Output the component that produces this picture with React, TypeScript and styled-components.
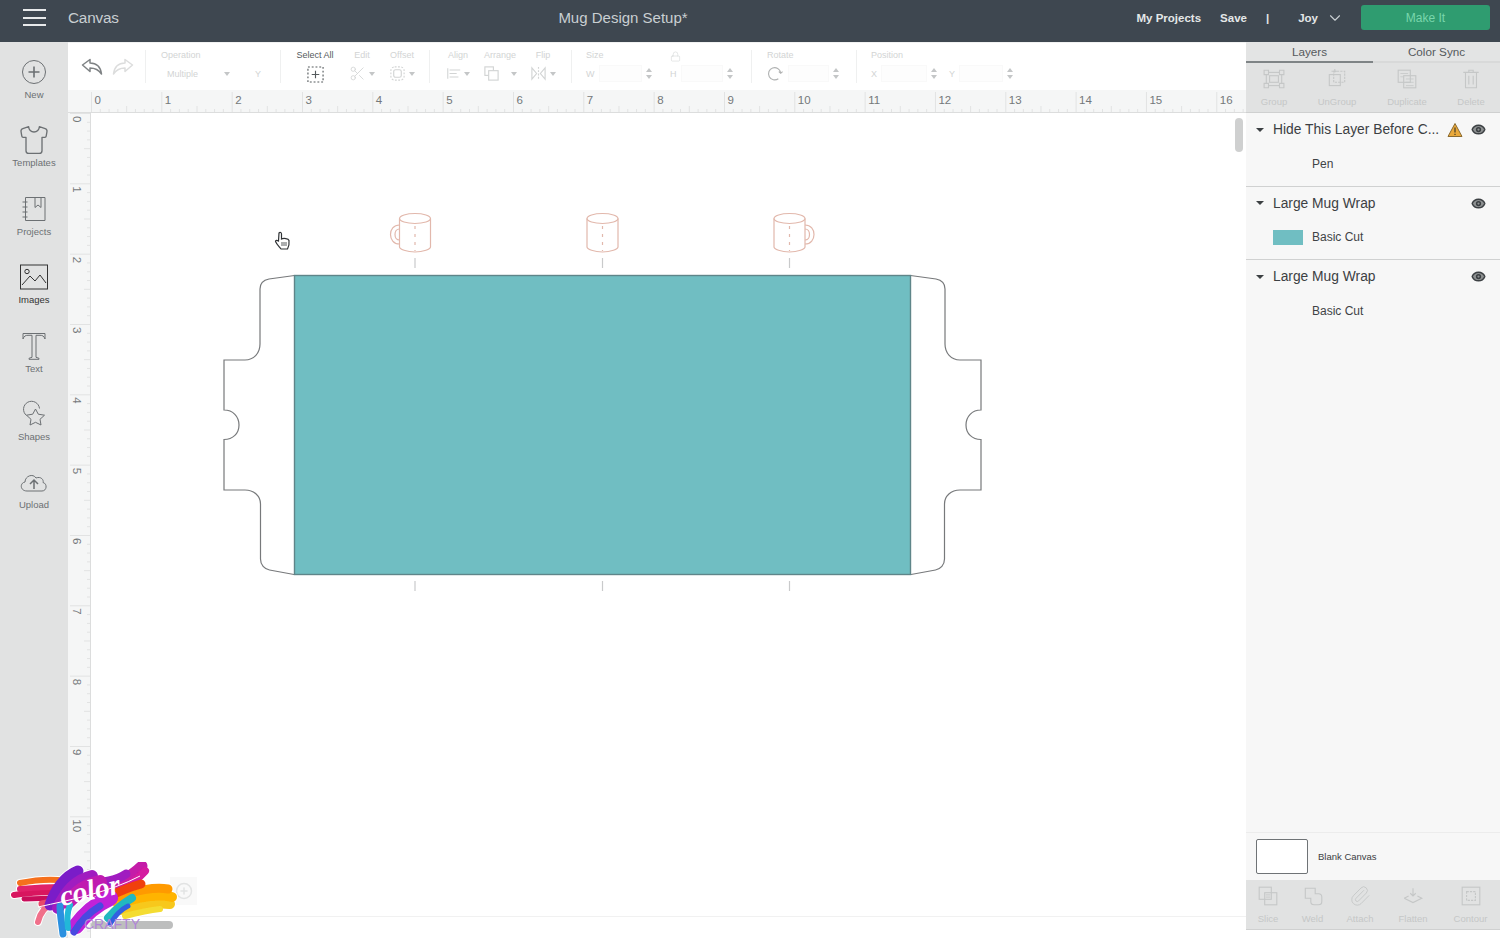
import React from "react";
import styled, { createGlobalStyle } from "styled-components";
import { CirclePlus, Shirt, ChevronDown, Eye, Paperclip, Scissors, Lock } from "lucide-react";

const UNIT = 70.33;
const MUG = "#e2b8ac";
const OUTLINE = "#77797b";

const GlobalStyle = createGlobalStyle`
  html, body { margin: 0; padding: 0; background: #fff; }
  body { font-family: "Liberation Sans", Arial, sans-serif; overflow: hidden; }
`;

const Page = styled.div`
  position: relative;
  width: 1500px;
  height: 938px;
  display: flex;
  flex-direction: column;
  overflow: hidden;
`;

const Header = styled.header`
  flex: 0 0 42px;
  box-sizing: border-box;
  padding-bottom: 7px;
  display: grid;
  grid-template-columns: 1fr auto 1fr;
  align-items: center;
  background: #3e4750;
  color: #e6e9ea;
`;

const HeaderLeft = styled.div`
  display: flex;
  align-items: center;
  padding-left: 23px;
`;

const Burger = styled.div`
  width: 23px;
  height: 13px;
  margin-right: 22px;
  border-top: 2px solid #e8eaeb;
  border-bottom: 2px solid #e8eaeb;
  position: relative;
  &::after {
    content: "";
    position: absolute;
    left: 0;
    right: 0;
    top: 5.5px;
    height: 2px;
    background: #e8eaeb;
  }
`;

const CanvasTitle = styled.span`
  font-size: 15.3px;
  color: #c9cfd2;
  letter-spacing: -0.2px;
`;

const DocTitle = styled.span`
  font-size: 15px;
  color: #c9cfd2;
  position: relative;
  left: -127px;
`;

const HeaderRight = styled.div`
  display: flex;
  align-items: center;
  justify-content: flex-end;
  padding-right: 10px;
  font-size: 11.5px;
  font-weight: 700;
  color: #e4e7e8;
`;

const HeaderLink = styled.span<{ $gap: number }>`
  margin-right: ${({ $gap }) => $gap}px;
`;

const JoyChevron = styled(ChevronDown)`
  width: 18px;
  height: 18px;
  margin: 0 17px 0 8px;
  stroke-width: 1.5;
  color: #c9cfd2;
`;

const MakeIt = styled.button`
  width: 129px;
  height: 25px;
  border: 0;
  border-radius: 3px;
  background: #2f9c70;
  color: #79d6ac;
  font: 12px "Liberation Sans", Arial, sans-serif;
`;

const Body = styled.div`
  flex: 1;
  min-height: 0;
  display: flex;
`;

const Sidebar = styled.nav`
  flex: 0 0 68px;
  background: #e1e2e2;
  padding-top: 14px;
  box-sizing: border-box;
`;

const SideItem = styled.div<{ $active?: boolean }>`
  height: 68.4px;
  display: flex;
  flex-direction: column;
  align-items: center;
  gap: 1px;
  color: ${({ $active }) => ($active ? "#333" : "#6c7073")};
  font-size: 9.5px;
  svg {
    width: 32px;
    height: 32px;
    stroke-width: 1;
  }
`;

const Main = styled.main`
  flex: 1;
  min-width: 0;
  display: flex;
  flex-direction: column;
`;

const Toolbar = styled.div`
  flex: 0 0 48px;
  display: flex;
  align-items: center;
  background: #fff;
  border-top: 1px solid #f1f2f2;
  box-sizing: border-box;
  color: #d2d4d4;
  font-size: 9px;
`;

const ToolGroup = styled.div<{ $width?: number; $pad: number; $gap?: number; $line?: boolean }>`
  flex: 0 0 ${({ $width }) => ($width ? `${$width}px` : "auto")};
  height: 33px;
  box-sizing: border-box;
  display: flex;
  align-items: stretch;
  padding-left: ${({ $pad }) => $pad}px;
  gap: ${({ $gap }) => $gap ?? 0}px;
  border-right: ${({ $line }) => ($line === false ? "none" : "1px solid #eff0f0")};
`;

const HistoryIcons = styled.div`
  display: flex;
  align-items: center;
  gap: 9px;
  svg {
    width: 22px;
    height: 18px;
  }
`;

const ToolColumn = styled.div<{ $width: number; $dark?: boolean; $align?: string }>`
  width: ${({ $width }) => $width}px;
  display: flex;
  flex-direction: column;
  align-items: ${({ $align }) => $align ?? "center"};
  justify-content: space-between;
  white-space: nowrap;
  color: ${({ $dark }) => ($dark ? "#555a5d" : "#d2d4d4")};
  svg {
    width: 17px;
    height: 17px;
    stroke-width: 1.2;
  }
`;

const ToolLabel = styled.span`
  line-height: 11px;
  height: 11px;
`;

const ControlRow = styled.div`
  width: 100%;
  height: 19px;
  display: flex;
  align-items: center;
  justify-content: space-between;
  gap: 2px;
`;

const OperationValue = styled.span`
  padding-left: 6px;
`;

const Caret = styled.i`
  flex: none;
  width: 0;
  height: 0;
  border-left: 3px solid transparent;
  border-right: 3px solid transparent;
  border-top: 4px solid #c4c6c7;
`;

const Spinner = styled.i`
  flex: none;
  width: 6px;
  height: 11px;
  position: relative;
  &::before,
  &::after {
    content: "";
    position: absolute;
    left: 0;
    border-left: 3px solid transparent;
    border-right: 3px solid transparent;
  }
  &::before {
    top: 0;
    border-bottom: 4px solid #c4c6c7;
  }
  &::after {
    bottom: 0;
    border-top: 4px solid #c4c6c7;
  }
`;

const FieldBox = styled.span`
  flex: 1;
  height: 15px;
  margin: 0 2px;
  background: #fdfdfd;
  border: 1px solid #f9f9f9;
`;

const LockGlyph = styled(Lock)`
  && {
    width: 11px;
    height: 13px;
  }
`;

const RulerTop = styled.svg`
  display: block;
  flex: 0 0 23px;
  width: 100%;
  height: 23px;
  background: #f5f6f6;
`;

const Workspace = styled.div`
  flex: 1;
  min-height: 0;
  display: flex;
`;

const RulerLeft = styled.svg`
  display: block;
  flex: 0 0 23px;
  height: 100%;
  background: #f5f6f6;
`;

const Canvas = styled.div`
  flex: 1;
  position: relative;
  background: #fff;
  overflow: hidden;
`;

const Artboard = styled.svg`
  position: absolute;
  left: 0;
  top: 0;
  width: 1155px;
  height: 825px;
`;

const CanvasScrollThumb = styled.div`
  position: absolute;
  right: 3px;
  top: 5px;
  width: 8px;
  height: 34px;
  border-radius: 4px;
  background: #cfd0d0;
`;

const BottomScrollLine = styled.div`
  position: absolute;
  left: 0;
  right: 0;
  bottom: 21px;
  height: 1px;
  background: #f1f1f1;
`;

const ZoomBox = styled.div`
  position: absolute;
  left: 79px;
  bottom: 33px;
  width: 27px;
  height: 28px;
  background: #f9f9f9;
  display: flex;
  align-items: center;
  justify-content: center;
  color: #e2e3e3;
  svg {
    width: 18px;
    height: 18px;
  }
`;

const BottomScrollThumb = styled.div`
  position: absolute;
  left: 0;
  bottom: 9px;
  width: 82px;
  height: 8px;
  border-radius: 4px;
  background: #bdbebe;
`;

const CursorMark = styled.svg`
  position: absolute;
  left: 183px;
  top: 118px;
  width: 17px;
  height: 20px;
`;

const Panel = styled.aside`
  flex: 0 0 254px;
  display: flex;
  flex-direction: column;
  background: #f7f7f7;
`;

const Tabs = styled.div`
  flex: 0 0 21px;
  display: grid;
  grid-template-columns: 127px 127px;
  background: #e3e4e4;
`;

const Tab = styled.div<{ $active?: boolean }>`
  display: flex;
  align-items: center;
  justify-content: center;
  font-size: 11.7px;
  color: #55595c;
  border-bottom: 2px solid ${({ $active }) => ($active ? "#7f8486" : "#d8d9d9")};
`;

const ActionRow = styled.div<{ $columns: string }>`
  flex: 0 0 50px;
  display: grid;
  grid-template-columns: ${({ $columns }) => $columns};
  background: #e1e2e2;
  border-bottom: 1px solid #cfd0d0;
  box-sizing: border-box;
`;

const ActionItem = styled.div`
  display: flex;
  flex-direction: column;
  align-items: center;
  justify-content: space-between;
  padding: 5px 0 5px;
  font-size: 9.5px;
  white-space: nowrap;
  color: #c5c7c7;
  svg {
    width: 22px;
    height: 22px;
    stroke-width: 1;
  }
`;

const LayerList = styled.div`
  flex: 1;
  min-height: 0;
`;

const LayerGroup = styled.section<{ $last?: boolean }>`
  height: 73.5px;
  box-sizing: border-box;
  padding-top: 0.5px;
  border-bottom: ${({ $last }) => ($last ? "none" : "1.5px solid #d0d1d1")};
`;

const LayerTitle = styled.div`
  height: 32px;
  display: flex;
  align-items: center;
  padding-left: 10px;
  font-size: 13.8px;
  color: #3c4043;
  white-space: nowrap;
`;

const LayerCaret = styled.i`
  flex: none;
  width: 0;
  height: 0;
  margin-right: 9px;
  border-left: 4px solid transparent;
  border-right: 4px solid transparent;
  border-top: 4px solid #3c4043;
`;

const LayerName = styled.span`
  flex: 1;
`;

const StatusIcon = styled.svg<{ $right: number }>`
  flex: none;
  width: 16px;
  height: 16px;
  margin-right: ${({ $right }) => $right}px;
`;

const EyeIcon = styled(Eye)`
  flex: none;
  width: 15px;
  height: 15px;
  margin-right: 14px;
  fill: #8d9091;
  color: #3c4043;
  stroke-width: 2.4;
`;

const LayerOp = styled.div`
  height: 36px;
  display: flex;
  align-items: center;
  padding-left: 27px;
  gap: 9px;
  font-size: 12px;
  color: #3f4346;
`;

const OpName = styled.span<{ $indent?: boolean }>`
  margin-left: ${({ $indent }) => ($indent ? "39px" : "0")};
`;

const Swatch = styled.span<{ $color: string }>`
  width: 30px;
  height: 15px;
  background: ${({ $color }) => $color};
`;

const BlankRow = styled.div`
  flex: 0 0 48px;
  box-sizing: border-box;
  display: flex;
  align-items: center;
  gap: 10px;
  padding-left: 10px;
  border-top: 1px solid #ececec;
  font-size: 9.5px;
  color: #3c4043;
`;

const BlankThumb = styled.div`
  width: 50px;
  height: 33px;
  background: #fff;
  border: 1px solid #6f7376;
  border-radius: 2px;
`;

const PanelFoot = styled.div`
  flex: 0 0 8px;
  background: #fff;
`;

const LogoMark = styled.svg`
  position: absolute;
  left: 0;
  bottom: 0;
  width: 200px;
  height: 80px;
`;

const SideIcons: { label: string; icon: React.ReactNode; active?: boolean }[] = [
  {
    label: "New",
    icon: (
      <svg viewBox="0 0 32 32" fill="none" stroke="currentColor" strokeWidth="1.3">
        <circle cx="16" cy="16" r="11.5" />
        <path d="M16 10.500v11M10.500 16h11" strokeWidth="1.6" />
      </svg>
    ),
  },
  { label: "Templates", icon: <Shirt /> },
  {
    label: "Projects",
    icon: (
      <svg viewBox="0 0 32 32" fill="none" stroke="currentColor" strokeWidth="1.2">
        <path d="M7.500 4.500H27v23H7.500Z" />
        <path d="M4.500 9h5M4.500 14h5M4.500 19h5M4.500 24h5" />
        <path d="M17 4.500v10l3-2.500 3 2.500v-10" />
      </svg>
    ),
  },
  {
    label: "Images",
    active: true,
    icon: (
      <svg viewBox="0 0 32 32" fill="none" stroke="currentColor" strokeWidth="1.4">
        <rect x="2.500" y="4" width="27" height="24" />
        <circle cx="9" cy="10.500" r="2.200" />
        <path d="M4 24 12 15l5 5 5-6 6 8" />
      </svg>
    ),
  },
  {
    label: "Text",
    icon: (
      <svg viewBox="0 0 32 32" fill="none" stroke="currentColor" strokeWidth="1.2">
        <path d="M5 9V3.500h22V9c-1-3-2.500-3.700-5-3.700h-4v22l3 1v1H11v-1l3-1v-22h-4C7.500 5.300 6 6 5 9Z" />
      </svg>
    ),
  },
  {
    label: "Shapes",
    icon: (
      <svg viewBox="0 0 32 32" fill="none" stroke="currentColor" strokeWidth="1.2">
        <path d="M8.500 17.500a8 8 0 1 1 13-7" />
        <path d="m17.500 11 2.800 5.200 6.200 1-4.500 4.100 1 5.700-5.500-2.700-5.500 2.700 1-5.700-4.500-4.100 6.200-1Z" />
      </svg>
    ),
  },
  {
    label: "Upload",
    icon: (
      <svg viewBox="0 0 32 32" fill="none" stroke="currentColor" strokeWidth="1.2">
        <path d="M9 25c-7 0-7.500-8-2-9 0-6 8-9 11-4 5-2 8 2 7 4.500 4.500 1 4 8.500-1 8.500Z" />
        <path d="M16 23v-9M12 18l4-4 4 4" strokeWidth="1.5" />
      </svg>
    ),
  },
];

type Streak = { d: string; w: number; c: string };

const LOGO_STREAKS: Streak[] = [
  { d: "M14 895C25 893 40 892 58 892", w: 6, c: "#d8125e" },
  { d: "M20 889C32 888 46 887 60 887", w: 6, c: "#e0206a" },
  { d: "M24 899L58 898", w: 5, c: "#c8105a" },
  { d: "M20 883C30 881 45 879 58 880", w: 6, c: "#f5701c" },
  { d: "M42 904L62 900", w: 7, c: "#e8486a" },
  { d: "M38 922C40 912 46 906 54 902", w: 6, c: "#f0708a" },
  { d: "M116 911C135 906 155 902 170 904", w: 10, c: "#f7c81c" },
  { d: "M125 916C140 912 150 910 160 909", w: 6, c: "#f4dc30" },
  { d: "M118 904C135 898 155 893 172 897", w: 10, c: "#ffb400" },
  { d: "M120 897C135 890 155 887 168 889", w: 9, c: "#ff9a00" },
  { d: "M90 892C110 888 130 878 142 866", w: 11, c: "#c41ba8" },
  { d: "M100 897C118 893 132 885 145 871", w: 8, c: "#d41aa0" },
  { d: "M84 884C100 884 118 880 126 874", w: 9, c: "#a01cc0" },
  { d: "M108 897C118 892 130 887 141 884", w: 9, c: "#f0400e" },
  { d: "M50 905C55 890 65 876 78 871", w: 11, c: "#7a1fc8" },
  { d: "M58 908C66 892 75 880 92 876", w: 12, c: "#a01fc0" },
  { d: "M68 902C78 892 85 885 100 882", w: 14, c: "#c01cb0" },
  { d: "M76 926C84 915 95 905 110 898", w: 16, c: "#c020d8" },
  { d: "M74 932C80 922 90 912 100 906", w: 7, c: "#4a48e0" },
  { d: "M63 934C62 925 60 915 60 906", w: 7, c: "#2a90e0" },
  { d: "M68 928C67 920 67 912 70 905", w: 6, c: "#20b8d8" },
  { d: "M108 918C115 910 122 904 132 898", w: 8, c: "#20b8c0" },
  { d: "M110 924C116 915 120 910 128 906", w: 5, c: "#3060e0" },
];

function buildTicks(count: number, long: number, small: number, along: "x" | "y") {
  const offset = along === "x" ? 23.5 : 0.5;
  const lines: React.ReactNode[] = [];
  for (let i = 0; i < count * 8; i++) {
    const pos = offset + (i * UNIT) / 8;
    const isUnit = i % 8 === 0;
    const len = isUnit ? long : i % 4 === 0 ? small + 3 : small;
    lines.push(
      along === "x" ? (
        <line key={i} x1={pos} x2={pos} y1={23 - len} y2={23} stroke="#e2e3e3" />
      ) : (
        <line key={i} y1={pos} y2={pos} x1={23 - len} x2={23} stroke="#e2e3e3" />
      ),
    );
  }
  return lines;
}

function TopRuler() {
  return (
    <RulerTop>
      {buildTicks(17, 21, 4, "x")}
      {Array.from({ length: 17 }, (_, i) => (
        <text key={i} x={23.5 + i * UNIT + 3} y={14} fontSize="11.5" fill="#74787a">
          {i}
        </text>
      ))}
      <line x1="0" x2="1178" y1="22.5" y2="22.5" stroke="#dcdddd" />
    </RulerTop>
  );
}

function LeftRuler() {
  return (
    <RulerLeft>
      {buildTicks(12, 21, 4, "y")}
      {Array.from({ length: 12 }, (_, i) => {
        const y = i * UNIT + 3;
        return (
          <text key={i} x={4.5} y={y} fontSize="11.5" fill="#74787a" transform={`rotate(90 4.500 ${y})`}>
            {i}
          </text>
        );
      })}
      <line x1="22.5" x2="22.5" y1="0" y2="825" stroke="#dcdddd" />
    </RulerLeft>
  );
}

function Mug({ x, handle }: { x: number; handle?: "left" | "right" }) {
  return (
    <g fill="none" stroke={MUG} strokeWidth="1.200">
      <ellipse cx={x} cy={218.5} rx={15.5} ry={5} />
      <path d={`M${x - 15.5} 218.500V247c0 2 7 5 15.500 5s15.500-3 15.500-5V218.500`} />
      <path d={`M${x} 226V251`} strokeDasharray="3 5" />
      {handle === "left" && <path d={`M${x - 15.5} 225c-12 0-12 19 0 19M${x - 15.5} 229c-6 0-6 11 0 11`} />}
      {handle === "right" && <path d={`M${x + 15.5} 225c12 0 12 19 0 19M${x + 15.5} 229c6 0 6 11 0 11`} />}
      <path d={`M${x} 258V268`} stroke="#c9cacb" />
      <path d={`M${x} 581V591`} stroke="#c9cacb" />
    </g>
  );
}

function Artwork() {
  return (
    <Artboard viewBox="91 113 1155 825">
      <Mug x={415} handle="left" />
      <Mug x={602.5} />
      <Mug x={789.5} handle="right" />
      <path
        d="M294.500 275.500 269 279c-5.500 1-9 4.500-9 10v55c0 9-6 16-15 16h-21v50c9 0 15 6.500 15 15s-6 14.500-15 14.500V490h21c9 0 15.500 6 15.500 14v55c0 6 4 10 9 11l24.500 4.500"
        fill="none"
        stroke={OUTLINE}
        strokeWidth="1.200"
      />
      <path
        d="M910.500 275.500 936 279c5.500 1 9 4.500 9 10v55c0 9 6 16 15 16h21v50c-9 0-15 6.500-15 15s6 14.500 15 14.500V490h-21c-9 0-15.500 6-15.500 14v55c0 6-4 10-9 11l-24.500 4.500"
        fill="none"
        stroke={OUTLINE}
        strokeWidth="1.200"
      />
      <rect x="294.500" y="275.500" width="616" height="299" fill="#70bec2" stroke="#5f8589" strokeWidth="1.400" />
    </Artboard>
  );
}

function Logo() {
  return (
    <LogoMark viewBox="0 858 200 80">
      <defs>
        <filter id="soft" x="-5%" y="-5%" width="110%" height="110%">
          <feGaussianBlur stdDeviation="0.7" />
        </filter>
      </defs>
      <g fill="none" strokeLinecap="round">
        {LOGO_STREAKS.map((s) => (
          <path key={`halo-${s.d}`} d={s.d} stroke="#fff" strokeWidth={s.w + 2} />
        ))}
        <g filter="url(#soft)">
          {LOGO_STREAKS.map((s) => (
            <path key={s.d} d={s.d} stroke={s.c} strokeWidth={s.w} />
          ))}
        </g>
      </g>
      <path d="M38 907C70 900 110 892 140 876" fill="none" stroke="#fff" strokeWidth="1" />
      <text
        x="62"
        y="906"
        fontFamily="'Liberation Serif', serif"
        fontStyle="italic"
        fontWeight="700"
        fontSize="29"
        fill="#fff"
        transform="rotate(-12 62 906)"
      >
        color
      </text>
      <text x="84" y="929" fontFamily="'Liberation Sans', Arial, sans-serif" fontSize="14" fill="#b184d8">
        CRAFTY
      </text>
    </LogoMark>
  );
}

export default function App() {
  return (
    <Page>
      <GlobalStyle />
      <Header>
        <HeaderLeft>
          <Burger />
          <CanvasTitle>Canvas</CanvasTitle>
        </HeaderLeft>
        <DocTitle>Mug Design Setup*</DocTitle>
        <HeaderRight>
          <HeaderLink $gap={19}>My Projects</HeaderLink>
          <HeaderLink $gap={19}>Save</HeaderLink>
          <HeaderLink $gap={29}>|</HeaderLink>
          <span>Joy</span>
          <JoyChevron />
          <MakeIt>Make It</MakeIt>
        </HeaderRight>
      </Header>
      <Body>
        <Sidebar>
          {SideIcons.map((item) => (
            <SideItem key={item.label} $active={item.active}>
              {item.icon}
              <span>{item.label}</span>
            </SideItem>
          ))}
        </Sidebar>
        <Main>
          <Toolbar>
            <ToolGroup $width={78} $pad={13} $line>
              <HistoryIcons>
                <svg viewBox="0 0 22 18" fill="none" stroke="#7e8284" strokeWidth="1.500" strokeLinejoin="round">
                  <path d="M1.500 7 9 1.500V5c6 0 10.500 3.500 11.500 11-3-4.500-6.500-6-11.500-6v3.500Z" />
                </svg>
                <svg viewBox="0 0 22 18" fill="none" stroke="#dcdddd" strokeWidth="1.500" strokeLinejoin="round">
                  <path d="M20.500 7 13 1.500V5C7 5 2.500 8.500 1.500 16c3-4.500 6.500-6 11.500-6v3.500Z" />
                </svg>
              </HistoryIcons>
            </ToolGroup>
            <ToolGroup $width={135} $pad={15}>
              <ToolColumn $width={100} $align="flex-start">
                <ToolLabel>Operation</ToolLabel>
                <ControlRow>
                  <OperationValue>Multiple</OperationValue>
                  <Caret />
                  <span>Y</span>
                </ControlRow>
              </ToolColumn>
            </ToolGroup>
            <ToolGroup $width={149} $pad={14} $gap={14}>
              <ToolColumn $width={40} $dark>
                <ToolLabel>Select All</ToolLabel>
                <svg viewBox="0 0 18 18" fill="none" stroke="#555a5d" strokeWidth="1">
                  <rect x="1" y="1" width="16" height="16" strokeDasharray="2 2" />
                  <path d="M9 5v8M5 9h8" />
                </svg>
              </ToolColumn>
              <ToolColumn $width={26}>
                <ToolLabel>Edit</ToolLabel>
                <ControlRow>
                  <Scissors />
                  <Caret />
                </ControlRow>
              </ToolColumn>
              <ToolColumn $width={26}>
                <ToolLabel>Offset</ToolLabel>
                <ControlRow>
                  <svg viewBox="0 0 18 18" fill="none" stroke="currentColor">
                    <rect x="5" y="5" width="8" height="8" rx="2" />
                    <rect x="2" y="2" width="14" height="14" rx="4" strokeDasharray="2 1.500" />
                  </svg>
                  <Caret />
                </ControlRow>
              </ToolColumn>
            </ToolGroup>
            <ToolGroup $width={142} $pad={16} $gap={13}>
              <ToolColumn $width={24}>
                <ToolLabel>Align</ToolLabel>
                <ControlRow>
                  <svg viewBox="0 0 18 18" fill="none" stroke="currentColor" strokeWidth="1.500">
                    <path d="M2 3v12M4 5h12M4 9h8M4 13h10" />
                  </svg>
                  <Caret />
                </ControlRow>
              </ToolColumn>
              <ToolColumn $width={34}>
                <ToolLabel>Arrange</ToolLabel>
                <ControlRow>
                  <svg viewBox="0 0 18 18" fill="none" stroke="currentColor">
                    <rect x="2" y="2" width="9" height="9" />
                    <rect x="6" y="6" width="10" height="10" fill="#fff" />
                  </svg>
                  <Caret />
                </ControlRow>
              </ToolColumn>
              <ToolColumn $width={26}>
                <ToolLabel>Flip</ToolLabel>
                <ControlRow>
                  <svg viewBox="0 0 18 18" fill="none" stroke="currentColor">
                    <path d="M9 2v14" strokeDasharray="2 1.500" />
                    <path d="M2 3l5 6-5 6ZM16 3l-5 6 5 6Z" />
                  </svg>
                  <Caret />
                </ControlRow>
              </ToolColumn>
            </ToolGroup>
            <ToolGroup $width={180} $pad={14} $gap={18}>
              <ToolColumn $width={66} $align="flex-start">
                <ToolLabel>Size</ToolLabel>
                <ControlRow>
                  <span>W</span>
                  <FieldBox />
                  <Spinner />
                </ControlRow>
              </ToolColumn>
              <ToolColumn $width={63} $align="flex-start">
                <ToolLabel>
                  <LockGlyph />
                </ToolLabel>
                <ControlRow>
                  <span>H</span>
                  <FieldBox />
                  <Spinner />
                </ControlRow>
              </ToolColumn>
            </ToolGroup>
            <ToolGroup $width={105} $pad={15}>
              <ToolColumn $width={72} $align="flex-start">
                <ToolLabel>Rotate</ToolLabel>
                <ControlRow>
                  <svg viewBox="0 0 18 18" fill="none" stroke="#b0b2b2" strokeWidth="1.300">
                    <path d="M12 14.500A6.500 6.500 0 1 1 14.500 8M12.500 7l2 1.800L16.500 7" />
                  </svg>
                  <FieldBox />
                  <Spinner />
                </ControlRow>
              </ToolColumn>
            </ToolGroup>
            <ToolGroup $pad={14} $gap={12} $line={false}>
              <ToolColumn $width={66} $align="flex-start">
                <ToolLabel>Position</ToolLabel>
                <ControlRow>
                  <span>X</span>
                  <FieldBox />
                  <Spinner />
                </ControlRow>
              </ToolColumn>
              <ToolColumn $width={64} $align="flex-start">
                <ToolLabel />
                <ControlRow>
                  <span>Y</span>
                  <FieldBox />
                  <Spinner />
                </ControlRow>
              </ToolColumn>
            </ToolGroup>
          </Toolbar>
          <TopRuler />
          <Workspace>
            <LeftRuler />
            <Canvas>
              <Artwork />
              <CanvasScrollThumb />
              <BottomScrollLine />
              <ZoomBox>
                <CirclePlus />
              </ZoomBox>
              <BottomScrollThumb />
              <CursorMark viewBox="0 0 17 20" fill="#fff" stroke="#2f3235" strokeWidth="1.200">
                <path d="M5 2c1-1 2.500-.5 2.500 1v5c2-1 7-.5 7.500 1.500.4 3-.2 6-1.500 8.500H7C5 15.500 2.500 13 1.500 10.500c0-1.500 1.500-1.500 3-.5Z" />
                <path d="M8 11v4M10 11v4M12 11v4" strokeWidth="0.800" />
              </CursorMark>
            </Canvas>
          </Workspace>
        </Main>
        <Panel>
          <Tabs>
            <Tab $active>Layers</Tab>
            <Tab>Color Sync</Tab>
          </Tabs>
          <ActionRow $columns="56px 70px 70px 58px">
            <ActionItem>
              <svg viewBox="0 0 20 20" fill="none" stroke="currentColor">
                <rect x="3" y="4" width="14" height="12" />
                <rect x="6" y="7" width="8" height="6" />
                <path d="M1 2h4v4H1ZM15 2h4v4h-4ZM1 14h4v4H1ZM15 14h4v4h-4Z" fill="#e1e2e2" />
              </svg>
              <span>Group</span>
            </ActionItem>
            <ActionItem>
              <svg viewBox="0 0 20 20" fill="none" stroke="currentColor">
                <rect x="3" y="6" width="10" height="10" />
                <rect x="7" y="3" width="10" height="10" strokeDasharray="2 1" />
                <path d="M8 1v3M5 3h5" />
              </svg>
              <span>UnGroup</span>
            </ActionItem>
            <ActionItem>
              <svg viewBox="0 0 20 20" fill="none" stroke="currentColor">
                <rect x="2" y="2" width="11" height="11" />
                <rect x="7" y="7" width="11" height="11" />
                <path d="M4 5h7M4 8h3M9 10h7M9 13h7M9 16h7" strokeWidth="0.700" />
              </svg>
              <span>Duplicate</span>
            </ActionItem>
            <ActionItem>
              <svg viewBox="0 0 20 20" fill="none" stroke="currentColor">
                <path d="M3 4h14M5 4v14h10V4M8 4V2h4v2M8 7v8M12 7v8" />
              </svg>
              <span>Delete</span>
            </ActionItem>
          </ActionRow>
          <LayerList>
            <LayerGroup>
              <LayerTitle>
                <LayerCaret />
                <LayerName>Hide This Layer Before C...</LayerName>
                <StatusIcon $right={8} viewBox="0 0 16 16">
                  <path d="M8 1.500 15 14.500H1Z" fill="#e9a83a" stroke="#8a6a30" />
                  <path d="M8 5.500v5M8 11.800v1.200" stroke="#5a4a2a" strokeWidth="1.400" />
                </StatusIcon>
                <EyeIcon />
              </LayerTitle>
              <LayerOp>
                <OpName $indent>Pen</OpName>
              </LayerOp>
            </LayerGroup>
            <LayerGroup>
              <LayerTitle>
                <LayerCaret />
                <LayerName>Large Mug Wrap</LayerName>
                <EyeIcon />
              </LayerTitle>
              <LayerOp>
                <Swatch $color="#70bec2" />
                <OpName>Basic Cut</OpName>
              </LayerOp>
            </LayerGroup>
            <LayerGroup $last>
              <LayerTitle>
                <LayerCaret />
                <LayerName>Large Mug Wrap</LayerName>
                <EyeIcon />
              </LayerTitle>
              <LayerOp>
                <OpName $indent>Basic Cut</OpName>
              </LayerOp>
            </LayerGroup>
          </LayerList>
          <BlankRow>
            <BlankThumb />
            <span>Blank Canvas</span>
          </BlankRow>
          <ActionRow $columns="44px 45px 50px 56px 59px">
            <ActionItem>
              <svg viewBox="0 0 20 20" fill="none" stroke="currentColor">
                <rect x="2" y="2" width="11" height="11" />
                <rect x="7" y="7" width="11" height="11" />
                <path d="M8 9h4M8 11h4" strokeWidth="0.800" />
              </svg>
              <span>Slice</span>
            </ActionItem>
            <ActionItem>
              <svg viewBox="0 0 20 20" fill="none" stroke="currentColor">
                <path d="M3 3h9v5h3c2 0 3 1 3 3v4c0 2-1 3-3 3h-4c-2 0-3-1-3-3v-3H3Z" />
              </svg>
              <span>Weld</span>
            </ActionItem>
            <ActionItem>
              <Paperclip />
              <span>Attach</span>
            </ActionItem>
            <ActionItem>
              <svg viewBox="0 0 20 20" fill="none" stroke="currentColor">
                <path d="M2 12l8 4 8-4-4-2M2 12l4-2" />
                <path d="M10 3v7M7.500 7.500 10 10l2.500-2.500" />
              </svg>
              <span>Flatten</span>
            </ActionItem>
            <ActionItem>
              <svg viewBox="0 0 20 20" fill="none" stroke="currentColor">
                <rect x="2" y="2" width="16" height="16" />
                <rect x="6" y="6" width="8" height="8" strokeDasharray="2 1" />
              </svg>
              <span>Contour</span>
            </ActionItem>
          </ActionRow>
          <PanelFoot />
        </Panel>
      </Body>
      <Logo />
    </Page>
  );
}
